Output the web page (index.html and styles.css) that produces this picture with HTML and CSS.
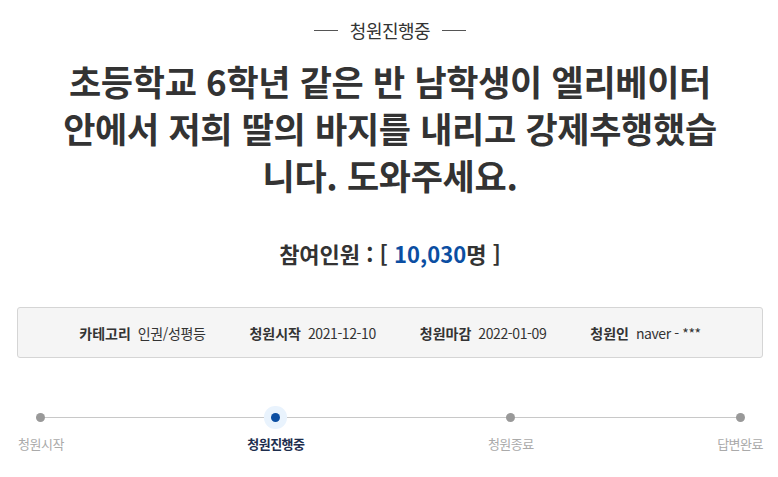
FILE: index.html
```html
<!DOCTYPE html>
<html lang="ko">
<head>
<meta charset="utf-8">
<title>청원진행중</title>
<link rel="stylesheet" href="styles.css">
</head>
<body>
<div class="page">
  <div class="status"><span class="dash"></span><span class="status-text">청원진행중</span><span class="dash"></span></div>
  <h1 class="title">초등학교 6학년 같은 반 남학생이 엘리베이터<br>안에서 저희 딸의 바지를 내리고 강제추행했습<br>니다. 도와주세요.</h1>
  <p class="count">참여인원 : [ <span class="num">10,030</span>명 ]</p>
  <div class="info">
    <div class="item"><span class="label">카테고리</span><span class="value">인권/성평등</span></div>
    <div class="item"><span class="label">청원시작</span><span class="value">2021-12-10</span></div>
    <div class="item"><span class="label">청원마감</span><span class="value">2022-01-09</span></div>
    <div class="item"><span class="label">청원인</span><span class="value">naver - ***</span></div>
  </div>
  <div class="steps">
    <div class="track"></div>
    <div class="step"><span class="dot"></span><span class="step-label">청원시작</span></div>
    <div class="step active"><span class="dot"></span><span class="step-label">청원진행중</span></div>
    <div class="step"><span class="dot"></span><span class="step-label">청원종료</span></div>
    <div class="step"><span class="dot"></span><span class="step-label">답변완료</span></div>
  </div>
</div>
</body>
</html>
```
FILE: styles.css
```css
* { box-sizing: border-box; }
html, body { margin: 0; padding: 0; background: #fff; }
body {
  font-family: "Noto Sans CJK KR", "Noto Sans", sans-serif;
  color: #333;
}
.page {
  width: 746px;
  margin-left: 17px;
  padding-top: 17px;
}
.status {
  display: flex;
  justify-content: center;
  align-items: center;
  gap: 12px;
  height: 26px;
}
.dash {
  width: 24px;
  height: 1px;
  background: #555;
}
.status-text {
  font-size: 18px;
  color: #333;
  line-height: 26px;
  letter-spacing: -0.5px;
}
.title {
  margin: 14px 0 0;
  text-align: center;
  font-size: 35px;
  line-height: 47px;
  font-weight: 700;
  color: #333;
  letter-spacing: -0.3px;
}
.count {
  margin: 40px 0 0;
  text-align: center;
  font-size: 22px;
  line-height: 30px;
  font-weight: 700;
  color: #333;
}
.num { color: #0b4ea2; }
.info {
  margin-top: 39px;
  height: 51px;
  border: 1px solid #d5d5d5;
  border-radius: 3px;
  background: #f5f5f5;
  display: flex;
  justify-content: center;
  align-items: center;
  gap: 44px;
  font-size: 14px;
}
.item { display: flex; gap: 7px; align-items: center; }
.label { font-weight: 700; color: #333; }
.value { color: #333; letter-spacing: -0.4px; }
.steps {
  position: relative;
  margin-top: 49px;
  display: flex;
  justify-content: space-between;
  padding: 0;
  margin-left: 1px;
}
.track {
  position: absolute;
  left: 24px;
  right: 24px;
  top: 10px;
  height: 1px;
  background: #c8c8c8;
}
.step {
  position: relative;
  display: flex;
  flex-direction: column;
  align-items: center;
}
.dot {
  width: 9px;
  height: 9px;
  margin-top: 6px;
  border-radius: 50%;
  background: #999;
  position: relative;
}
.active .dot {
  background: #0b4ea2;
  box-shadow: 0 0 0 7px #e9f3fd;
}
.step-label {
  margin-top: 13px;
  font-size: 13px;
  line-height: 18px;
  color: #aaa;
  letter-spacing: -0.5px;
}
.active .step-label {
  color: #1e2e4e;
  font-weight: 700;
  font-size: 13px;
}
```
